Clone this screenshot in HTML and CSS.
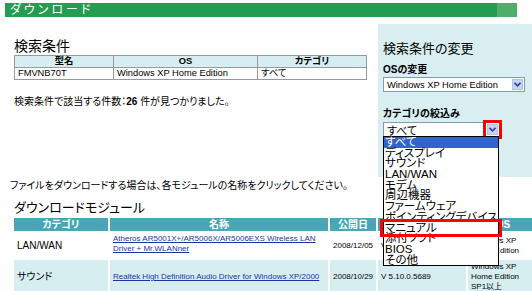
FILE: index.html
```html
<!DOCTYPE html>
<html lang="ja">
<head>
    <meta charset="UTF-8">
    <title>ダウンロード</title>
    <link rel="stylesheet" href="styles.css">
</head>
<body>
    <div class="page">
        <div class="title-bar">ダウンロード</div>

        <div class="top">
            <div class="left">
                <h2 class="heading">検索条件</h2>
                <table class="cond">
                    <tr>
                        <th class="c-model">型名</th>
                        <th class="c-os">OS</th>
                        <th>カテゴリ</th>
                    </tr>
                    <tr>
                        <td>FMVNB70T</td>
                        <td>Windows XP Home Edition</td>
                        <td>すべて</td>
                    </tr>
                </table>
                <p class="count">検索条件で該当する件数：<b>26</b> 件が見つかりました。</p>
            </div>

            <!-- search change panel -->
            <div class="side">
                <h2 class="side-title">検索条件の変更</h2>
                <h3 class="label">OSの変更</h3>
                <div class="select select-os">
                    <span class="select-text">Windows XP Home Edition</span>
                    <span class="arrow"><svg width="7" height="5" viewBox="0 0 7 5"><path d="M0.5 0.8 L3.5 3.8 L6.5 0.8" fill="none" stroke="#2b3f8f" stroke-width="1.6"/></svg></span>
                </div>
                <h3 class="label label-cat">カテゴリの絞込み</h3>
                <div class="select-wrap">
                    <div class="select select-cat">
                        <span class="select-text">すべて</span>
                        <span class="arrow marked"><svg width="7" height="5" viewBox="0 0 7 5"><path d="M0.5 0.8 L3.5 3.8 L6.5 0.8" fill="none" stroke="#2b3f8f" stroke-width="1.6"/></svg></span>
                    </div>
                    <ul class="options">
                        <li class="current">すべて</li>
                        <li>ディスプレイ</li>
                        <li>サウンド</li>
                        <li>LAN/WAN</li>
                        <li>モデム</li>
                        <li>周辺機器</li>
                        <li>ファームウェア</li>
                        <li>ポインティングデバイス</li>
                        <li class="marked">マニュアル</li>
                        <li>添付ソフト</li>
                        <li>BIOS</li>
                        <li>その他</li>
                    </ul>
                </div>
            </div>
        </div>

        <p class="note">ファイルをダウンロードする場合は、各モジュールの名称をクリックしてください。</p>

        <h2 class="heading modules-title">ダウンロードモジュール</h2>
        <table class="modules">
            <colgroup>
                <col style="width: 94px">
                <col style="width: 218px">
                <col style="width: 46px">
                <col style="width: 88px">
                <col style="width: 70px">
            </colgroup>
            <tr>
                <th>カテゴリ</th>
                <th>名称</th>
                <th>公開日</th>
                <th>バージョン</th>
                <th>OS</th>
            </tr>
            <tr class="odd">
                <td>LAN/WAN</td>
                <td><a href="#">Atheros AR5001X+/AR5006X/AR5006EXS Wireless LAN Driver + Mr.WLANner</a></td>
                <td class="date">2008/12/05</td>
                <td>V 5.3.0.35</td>
                <td>Windows XP<br>Home Edition</td>
            </tr>
            <tr class="even">
                <td>サウンド</td>
                <td><a href="#">Realtek High Definition Audio Driver for Windows XP/2000</a></td>
                <td class="date">2008/10/29</td>
                <td>V 5.10.0.5689</td>
                <td>Windows XP<br>Home Edition<br>SP1以上</td>
            </tr>
        </table>
    </div>
</body>
</html>
```

FILE: styles.css
```css
body {
    margin: 0;
    font-family: "Liberation Sans", "Noto Sans CJK JP", sans-serif;
    font-feature-settings: "palt";
    font-size: 10px;
    color: #000;
    background: #fff;
    overflow: hidden;
}
.page {
    padding: 3px 0 0 5px;
}
.title-bar {
    width: 512px;
    height: 14px;
    line-height: 14px;
    box-sizing: border-box;
    padding-left: 5px;
    background: linear-gradient(to right, #239d50 492px, #4fae6c 492px);
    color: #fff;
    font-size: 12px;
    letter-spacing: 3px;
}
.top {
    display: flex;
    margin-top: 7px;
}
.left {
    width: 353px;
    margin-left: 9px;
}
.heading {
    margin: 14px 0 1px;
    font-size: 14px;
    font-weight: normal;
    line-height: 16px;
}
.cond {
    width: 353px;
    border-collapse: collapse;
}
.cond th, .cond td {
    border: 1px solid #999;
    height: 11px;
    padding: 0 3px;
    font-size: 9.3px;
    line-height: 11px;
    text-align: left;
}
.cond th {
    background: #d6eef2;
    text-align: center;
}
.cond .c-model {
    width: 92px;
}
.cond .c-os {
    width: 137px;
}
.count {
    margin: 16px 0 0;
    line-height: 12px;
}
.side {
    width: 149px;
    height: 153px;
    margin-left: 11px;
    padding-left: 5px;
    background: #d8eef0;
}
.side-title {
    margin: 17px 0 0;
    font-size: 13px;
    font-weight: normal;
    line-height: 15px;
}
.label {
    margin: 8px 0 2px;
    font-size: 10px;
    line-height: 11px;
}
.label-cat {
    margin: 16px 0 3px;
}
.select {
    display: flex;
    align-items: center;
    justify-content: space-between;
    box-sizing: border-box;
    height: 15px;
    padding: 0 1px 0 3px;
    border: 1px solid #7f9db9;
    background: #fff;
}
.select-os {
    width: 142px;
    font-size: 9.3px;
}
.select-cat {
    width: 117px;
    font-size: 11px;
}
.arrow {
    display: flex;
    align-items: center;
    justify-content: center;
    width: 11px;
    height: 11px;
    background: #c6d4f2;
    border: 1px solid #b0c2ea;
    box-sizing: border-box;
}
.arrow.marked {
    outline: 3px solid #f00;
    outline-offset: 1px;
}
.select-wrap {
    position: relative;
}
.options {
    position: absolute;
    top: 14px;
    left: 0;
    z-index: 2;
    width: 114px;
    margin: 0;
    padding: 0;
    list-style: none;
    background: #fff;
    border: 1px solid #000;
}
.options li {
    height: 10.7px;
    padding-left: 1px;
    font-size: 11.5px;
    line-height: 10.7px;
}
.options li.current {
    background: #3165cc;
    color: #fff;
}
.options li.marked {
    outline: 3px solid #f00;
    outline-offset: 1px;
}
.note {
    margin: 3px 0 0 5px;
    line-height: 12px;
}
.modules-title {
    margin: 8px 0 0 9px;
    font-size: 13px;
}
.modules {
    margin-left: 7px;
    width: 526px;
    table-layout: fixed;
    border-spacing: 2px;
}
.modules th {
    height: 13px;
    padding: 0;
    background: #48a6b6;
    color: #fff;
    font-size: 10px;
    line-height: 13px;
}
.modules td {
    padding: 0 3px;
    font-size: 8px;
    line-height: 10px;
    white-space: nowrap;
    overflow: hidden;
}
.modules td:first-child {
    font-size: 10px;
}
.modules td:nth-child(2) {
    padding-right: 0;
    white-space: normal;
}
.modules tr.odd td {
    height: 22px;
}
.modules tr.odd td:nth-child(2) {
    padding-bottom: 3px;
}
.modules tr.even td {
    height: 34px;
    background: #d6eef0;
}
.modules a {
    color: #1b35a0;
}
```
